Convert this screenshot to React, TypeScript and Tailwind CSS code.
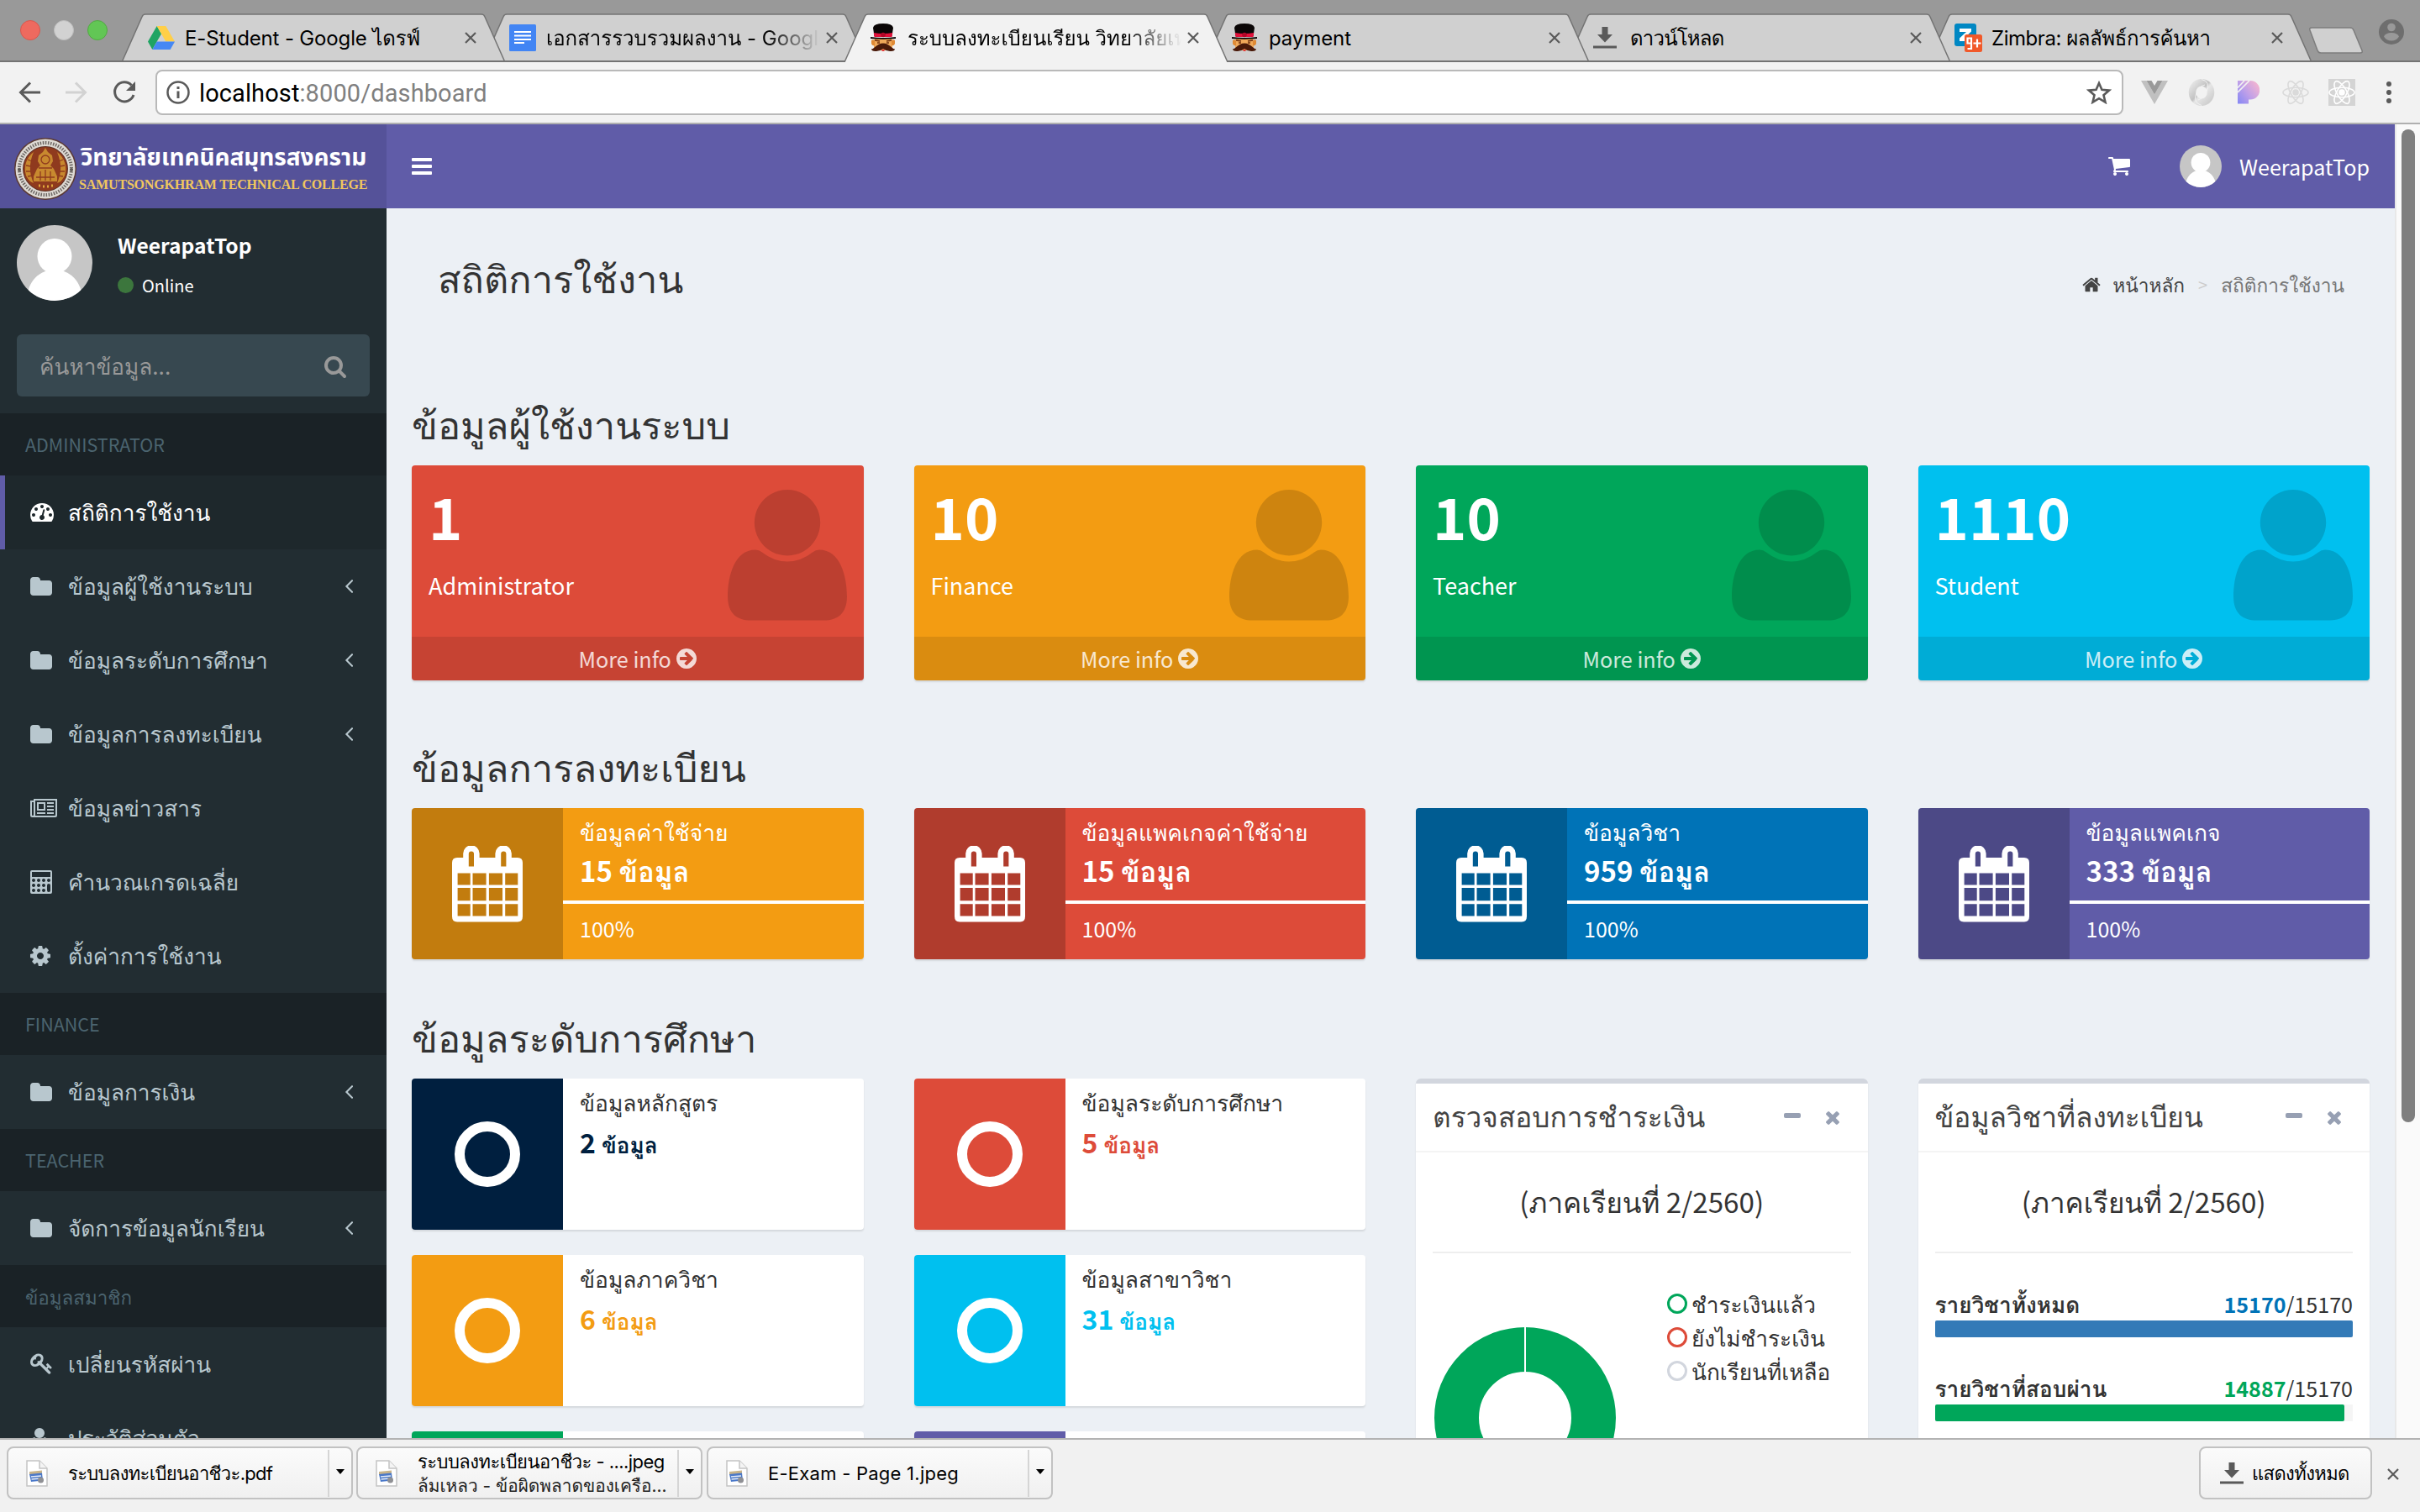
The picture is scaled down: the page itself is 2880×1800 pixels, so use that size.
import React from 'react';

type IconProps = { className?: string };

const UI = "font-['Noto_Sans_CJK_SC','Loma',sans-serif]";
const CHROME = "font-['Inter','Loma',sans-serif]";

/* ---------- icons ---------- */

const glyph = (viewBox: string, d: string) =>
  function Glyph({ className = '' }: IconProps) {
    return (
      <svg viewBox={viewBox} className={className} fill="currentColor" fillRule="evenodd">
        <path d={d} />
      </svg>
    );
  };

const Folder = glyph('0 0 1664 1664', 'M1664 608v704q0 92-66 158t-158 66H224q-92 0-158-66T0 1312V352q0-92 66-158t158-66h320q92 0 158 66t66 158v32h672q92 0 158 66t66 158z');
const AngleLeft = glyph('45 77 582 998', 'M627 992q0 13-10 23l-50 50q-10 10-23 10t-23-10L55 599q-10-10-10-23t10-23L521 87q10-10 23-10t23 10l50 50q10 10 10 23t-10 23L224 576l393 393q10 10 10 23z');
const Home = glyph('64 128 1664 1536', 'M1472 992v480q0 26-19 45t-45 19h-384v-384H768v384H384q-26 0-45-19t-19-45V992q0-1 .5-3t.5-3l575-474 575 474q1 2 1 6zm223-69l-62 74q-8 9-21 11h-3q-13 0-21-7L896 424l-692 577q-12 8-24 7-13-2-21-11l-62-74q-8-10-7-23.5t11-21.5l719-599q32-26 76-26t76 26l244 204V288q0-14 9-23t23-9h192q14 0 23 9t9 23v408l219 182q10 8 11 21.5t-7 23.5z');
const Cog = glyph('128 128 1536 1536', 'M1152 896q0-106-75-181t-181-75-181 75-75 181 75 181 181 75 181-75 75-181zm512-109v222q0 12-8 23t-20 13l-185 28q-19 54-39 91 35 50 107 138 10 12 10 25t-9 23q-27 37-99 108t-94 71q-12 0-26-9l-138-108q-44 23-91 38-16 136-29 186-7 28-36 28H785q-14 0-24.500-8.500T749 1634l-28-184q-49-16-90-37l-141 107q-10 9-25 9-14 0-25-11-126-114-165-168-7-10-7-23 0-12 8-23 15-21 51-66.500t54-70.500q-27-50-41-99l-183-27q-13-2-21-12.500t-8-23.500V783q0-12 8-23t19-13l186-28q14-46 39-92-40-57-107-138-10-12-10-24 0-10 9-23 26-36 98.500-107.500T465 263q13 0 26 10l138 107q44-23 91-38 16-136 29-186 7-28 36-28h222q14 0 24.500 8.500T1043 158l28 184q49 16 90 37l142-107q9-9 24-9 13 0 25 10 129 119 165 170 7 8 7 22 0 12-8 23-15 21-51 66.500t-54 70.500q26 50 41 98l183 28q13 2 21 12.500t8 23.500z');
const Search = glyph('64 128 1664 1664', 'M1216 832q0-185-131.500-316.500T768 384 451.500 515.500 320 832t131.500 316.500T768 1280t316.500-131.500T1216 832zm512 832q0 52-38 90t-90 38q-54 0-90-38l-343-342q-179 124-399 124-143 0-273.500-55.500t-225-150-150-225T64 832t55.500-273.500 150-225 225-150T768 128t273.500 55.500 225 150 150 225T1472 832q0 220-124 399l343 343q37 37 37 90z');
const ArrowCircle = glyph('128 128 1536 1536', 'M1413 896q0-27-18-45L1033 489l-91-91q-18-18-45-18t-45 18l-91 91q-18 18-18 45t18 45l189 189H448q-26 0-45 19t-19 45v128q0 26 19 45t45 19h502l-189 189q-19 19-19 45t19 45l91 91q18 18 45 18t45-18l362-362q18-18 18-45zm251 0q0 209-103 385.500T1281.500 1561 896 1664t-385.500-103T231 1281.500 128 896t103-385.500T510.500 231 896 128t385.500 103T1561 510.500 1664 896z');
const Times = glyph('302 366 1188 1188', 'M1490 1322q0 40-28 68l-136 136q-28 28-68 28t-68-28l-294-294-294 294q-28 28-68 28t-68-28l-136-136q-28-28-28-68t28-68l294-294-294-294q-28-28-28-68t28-68l136-136q28-28 68-28t68 28l294 294 294-294q28-28 68-28t68 28l136 136q28 28 28 68t-28 68l-294 294 294 294q28 28 28 68z');
const Key = glyph('0 100 1700 1700', 'M832 512q0-80-56-136t-136-56-136 56-56 136q0 42 19 83-41-19-83-19-80 0-136 56t-56 136 56 136 136 56 136-56 56-136q0-42-19-83 41 19 83 19 80 0 136-56t56-136zm851 704q0 17-49 66t-66 49q-9 0-28.500-16t-36.500-33-38.500-40-24.500-26l-96 96 220 220q28 28 28 68 0 42-39 81t-81 39q-40 0-68-28l-671-671q-176 131-365 131-163 0-265.500-102.500T0 784q0-160 95-313t248-248 313-95q163 0 265.500 102.500T1024 496q0 189-131 365l355 355 96-96q-3-3-26-24.500t-40-38.500-33-36.500-16-28.500q0-17 49-66t66-49q13 0 23 10 6 6 46 44.500t82 79.500 86.500 86 73 78 28.500 41z');
const Dashboard = glyph('0 256 1792 1408', 'M384 1152q0-53-37.500-90.500T256 1024t-90.500 37.500T128 1152t37.500 90.500T256 1280t90.500-37.500T384 1152zm192-448q0-53-37.500-90.500T448 576t-90.500 37.500T320 704t37.500 90.500T448 832t90.500-37.500T576 704zm428 481l101-382q6-26-7.500-48.500T1059 725t-48 6.500-30 39.500l-101 382q-60 5-107 43.500t-63 98.500q-20 77 20 146t117 89 146-20 89-117q16-60-6-117t-72-91zm660-33q0-53-37.500-90.500T1536 1024t-90.500 37.500T1408 1152t37.500 90.500T1536 1280t90.500-37.500T1664 1152zm-640-640q0-53-37.500-90.500T896 384t-90.500 37.500T768 512t37.500 90.500T896 640t90.500-37.500T1024 512zm448 192q0-53-37.500-90.500T1344 576t-90.500 37.500T1216 704t37.500 90.500T1344 832t90.500-37.500T1472 704zm320 448q0 261-141 483-19 29-54 29H195q-35 0-54-29Q0 1414 0 1152q0-182 71-348t191-286 286-191 348-71 348 71 286 191 191 286 71 348z');
const Cart = glyph('60 256 1668 1408', 'M704 1536q0 52-38 90t-90 38-90-38-38-90 38-90 90-38 90 38 38 90zm896 0q0 52-38 90t-90 38-90-38-38-90 38-90 90-38 90 38 38 90zm128-1088v512q0 24-16.500 42.500T1671 1024L627 1146q13 60 13 70 0 16-24 64h920q26 0 45 19t19 45-19 45-45 19H512q-26 0-45-19t-19-45q0-11 8-31.500t16-36 21.500-40T505 1207L328 384H124q-26 0-45-19t-19-45 19-45 45-19h256q16 0 28.500 6.500T428 278t13 24.500 8 26 5.500 29.500 4.500 26h1201q26 0 45 19t19 45z');
const Newspaper = glyph('0 0 32 22', 'M4 0H32V19.500Q32 22 29.500 22H2.500Q0 22 0 19.500V2H4ZM2 4V19Q2 20 3 20T4 19V4ZM6 2V20H29Q30 20 30 19V2ZM8 4H18V14H8ZM10 6V12H16V6ZM20 4H28V6H20ZM20 8H28V10H20ZM20 12H28V14H20ZM8 16H18V18H8ZM20 16H28V18H20Z');
const Calculator = glyph('0 0 26 28', 'M2 0H24Q26 0 26 2V26Q26 28 24 28H2Q0 28 0 26V2Q0 0 2 0ZM2 2V8H24V2ZM4 10a2 2 0 1 0 .01 0ZM10 10a2 2 0 1 0 .01 0ZM16 10a2 2 0 1 0 .01 0ZM22 10a2 2 0 1 0 .01 0ZM4 16a2 2 0 1 0 .01 0ZM10 16a2 2 0 1 0 .01 0ZM16 16a2 2 0 1 0 .01 0ZM22 16a2 2 0 0 0-2 2v6a2 2 0 0 0 4 0v-6a2 2 0 0 0-2-2ZM4 22a2 2 0 1 0 .01 0ZM10 22a2 2 0 1 0 .01 0ZM16 22a2 2 0 1 0 .01 0Z');
const User = glyph('0 0 22 24', 'M11 0a6 6 0 1 0 .01 0ZM5 11Q0 12 0 20Q0 24 4 24H18Q22 24 22 20Q22 12 17 11Q11 16 5 11Z');
const Person = glyph('0 0 142 156', 'M71 0a39.200 39.200 0 1 0 .01 0ZM33 71.500Q37.500 71.500 41 74.500Q55 85.500 71 85.500Q87 85.500 101 74.500Q104.500 71.500 109 71.500C134 71.500 142 103 142 127C142 148 130 155.500 115 155.500H27C12 155.500 0 148 0 127C0 103 8 71.500 33 71.500Z');
const Calendar = glyph('0 0 84 91', 'M6 14H13.200V9A9.700 9.700 0 0 1 32.600 9V14H51.400V9A9.700 9.700 0 0 1 70.800 9V14H78Q84 14 84 20V84Q84 90.500 78 90.500H6Q0 90.500 0 84V20Q0 14 6 14ZM19.800 9.500V24.500H26V9.500A3.100 3.100 0 0 0 19.800 9.500ZM58.200 9.500V24.500H64.400V9.500A3.100 3.100 0 0 0 58.200 9.500ZM6.600 32.600V46.500H21.700V32.600ZM24.500 32.600V46.500H40.600V32.600ZM43.900 32.600V46.500H60V32.600ZM63.200 32.600V46.500H78.300V32.600ZM6.600 50V65.200H21.700V50ZM24.500 50V65.200H40.600V50ZM43.900 50V65.200H60V50ZM63.200 50V65.200H78.300V50ZM6.600 69.300V83.600H21.700V69.300ZM24.500 69.300V83.600H40.600V69.300ZM43.900 69.300V83.600H60V69.300ZM63.200 69.300V83.600H78.300V69.300Z');

function Avatar({ className = '' }: IconProps) {
  return (
    <svg viewBox="0 0 90 90" className={`rounded-full ${className}`}>
      <rect width="90" height="90" fill="#c6c6c6" />
      <ellipse cx="45" cy="37" rx="20.500" ry="21" fill="#fff" />
      <path d="M12 90C12 66 28 53 45 53S78 66 78 90Z" fill="#fff" />
    </svg>
  );
}

function CloseX({ className = '' }: IconProps) {
  return (
    <svg viewBox="0 0 14 14" className={className} stroke="#5a5a5a" strokeWidth="2.200" fill="none">
      <path d="M1 1L13 13M13 1L1 13" />
    </svg>
  );
}

function DownloadArrow({ className = '' }: IconProps) {
  return (
    <svg viewBox="0 0 28 26" className={className} fill="#5a5a5a">
      <path d="M10.500 0h7v9h5.500L14 18.500 5 9h5.500zM0 22.500h28v3H0z" />
    </svg>
  );
}

function Atom({ className = '', color }: IconProps & { color: string }) {
  return (
    <svg viewBox="0 0 32 32" className={className} fill="none" stroke={color} strokeWidth="1.600">
      <ellipse cx="16" cy="16" rx="15" ry="5.800" />
      <ellipse cx="16" cy="16" rx="15" ry="5.800" transform="rotate(60 16 16)" />
      <ellipse cx="16" cy="16" rx="15" ry="5.800" transform="rotate(120 16 16)" />
      <circle cx="16" cy="16" r="3" fill={color} />
    </svg>
  );
}

function Emblem({ className = '' }: IconProps) {
  return (
    <svg viewBox="0 0 76 76" className={className}>
      <circle cx="38" cy="38" r="37" fill="#5b3a35" />
      <circle cx="38" cy="38" r="35.500" fill="#dedad4" />
      <circle cx="38" cy="38" r="31" fill="none" stroke="#6d6763" strokeWidth="4" strokeDasharray="1.500 1.600" />
      <circle cx="38" cy="38" r="27" fill="#5b3025" />
      <circle cx="38" cy="38" r="26" fill="#8f3a1e" />
      <g fill="#c8892f">
        <path d="M38 13l3 5 5 4 1 7-3 5 4 4 4 9v6H24v-6l4-9 4-4-3-5 1-7 5-4z" />
        <path d="M24 18c-9 7-12 17-9 28 3 6 6 8 9 9-5-11-6-23 0-37zM52 18c9 7 12 17 9 28-3 6-6 8-9 9 5-11 6-23 0-37z" />
      </g>
      <g fill="none" stroke="#8f3a1e" strokeWidth="1.300">
        <circle cx="38" cy="27" r="5" />
        <path d="M30 37h16M32 41v11M38 39v13M44 41v11M27 48h22M17 27l5 2M15 34l6 1M15 41l6 0M17 47l6-1M59 27l-5 2M61 34l-6 1M61 41l-6 0M59 47l-6-1" />
      </g>
      <path d="M30 58h2M35 59h2M40 59h2M45 58h2" stroke="#e0a73c" strokeWidth="3" />
      <circle cx="7" cy="39" r="2" fill="#5f5955" />
      <circle cx="69" cy="39" r="2" fill="#5f5955" />
    </svg>
  );
}

/* ---------- favicons ---------- */

function DriveIcon() {
  return (
    <svg viewBox="0 0 32 28" className="h-7 w-8">
      <path d="M10.700 0L0 18.600 5.300 28 16 9.300z" fill="#1fa463" />
      <path d="M10.700 0h10.600L32 18.600H21.300z" fill="#ffcf48" />
      <path d="M10.700 18.600H32L26.700 28H5.300z" fill="#4688f4" />
    </svg>
  );
}

function DocsIcon() {
  return (
    <svg viewBox="0 0 32 32" className="h-8 w-8">
      <rect width="32" height="32" rx="1.500" fill="#4285f4" />
      <path d="M6 8h20v2H6zM6 12.500h20v2H6zM6 17h20v2H6zM6 21h12v2H6z" fill="#fff" />
    </svg>
  );
}

function HatIcon() {
  return (
    <svg viewBox="0 0 30 34" className="h-[34px] w-[30px]">
      <rect x="4" y="17" width="22" height="15" rx="4" fill="#f0a95a" />
      <path d="M1 20q3-2 4 1v5q-3 1-4-2zM29 20q-3-2-4 1v5q3 1 4-2z" fill="#e08a35" />
      <path d="M5 20l6 1M19 21l6-1M8 23h3M19 23h3" stroke="#6d2e0c" strokeWidth="1.500" />
      <path d="M15 23.500C11 23.500 8 25.500 4 29Q2 31 1 30Q1 33.500 7 33Q12 32.500 15 30Q18 32.500 23 33Q29 33.500 29 30Q28 31 26 29C22 25.500 19 23.500 15 23.500Z" fill="#4a1a0a" />
      <path d="M13.500 31h3v2h-3z" fill="#e23b3b" />
      <path d="M3 5Q4 0 15 0T27 5L25.500 15H4.500z" fill="#0a0606" />
      <path d="M3.800 11q11.200 2 22.400 0l-.7 5h-21z" fill="#e0103a" />
      <circle cx="15" cy="13.500" r="2.800" fill="#b00828" />
      <path d="M0 16q15 2 30 0v2q-15 1.500-30 0z" fill="#0a0606" />
    </svg>
  );
}

function ZimbraIcon() {
  return (
    <svg viewBox="0 0 34 34" className="h-[34px] w-[34px]">
      <rect x="0" y="0" width="26" height="27" rx="3" fill="#0087c3" />
      <path d="M6 6h14v3.500L12 17h8v4H6v-3.500L14 10H6z" fill="#fff" />
      <rect x="12" y="13" width="21" height="21" rx="2.500" fill="#f1592a" />
      <path d="M20 17.500h-4.500v6H20v-6zM20 22v8h-4.500M22.500 23.500h9M27 18.500v10" stroke="#fff" strokeWidth="2.200" fill="none" />
    </svg>
  );
}

/* ---------- browser chrome ---------- */

const tabs = [
  { title: 'E-Student - Google ไดรฟ์', icon: <DriveIcon />, z: 'z-[6]', track: 'tracking-[-0.15px]' },
  { title: 'เอกสารรวบรวมผลงาน - Google', icon: <DocsIcon />, z: 'z-[5]', track: '', fade: true },
  { title: 'ระบบลงทะเบียนเรียน วิทยาลัยเทค', icon: <HatIcon />, z: 'z-10', track: '', active: true, fade: true },
  { title: 'payment', icon: <HatIcon />, z: 'z-[4]', track: 'tracking-[-0.1px]' },
  { title: 'ดาวน์โหลด', icon: <DownloadArrow className="h-[26px] w-7" />, z: 'z-[3]', track: 'tracking-[-0.8px]' },
  { title: 'Zimbra: ผลลัพธ์การค้นหา', icon: <ZimbraIcon />, z: 'z-[2]', track: 'tracking-[-0.45px]' },
];

function TabStrip() {
  return (
    <div className={`flex h-[74px] shrink-0 items-end bg-[#999999] ${CHROME}`}>
      <div className="flex h-[74px] w-[145px] shrink-0 items-center gap-4 border-b-2 border-[#737373] pl-6">
        <span className="h-6 w-6 rounded-full border border-[#d9574d] bg-[#ee6a5f]" />
        <span className="h-6 w-6 rounded-full border border-[#bdbdbd] bg-[#d2d2d2]" />
        <span className="h-6 w-6 rounded-full border border-[#52a843] bg-[#62c655]" />
      </div>
      {tabs.map((t) => (
        <div key={t.title} className={`relative -mr-[26px] h-[58px] w-[456px] shrink-0 ${t.z}`}>
          <svg viewBox="0 0 456 58" className="absolute inset-0 h-[58px] w-[456px]">
            <path
              d="M0 58L24 4Q25 1 28 1H428Q431 1 432 4L456 58Z"
              fill={t.active ? '#f2f2f2' : '#d0d0d0'}
            />
            <path
              d="M0 58L24 4Q25 1 28 1H428Q431 1 432 4L456 58"
              fill="none"
              stroke="#737373"
              strokeWidth="1.500"
            />
            {!t.active && <path d="M0 57H456" stroke="#737373" strokeWidth="2" />}
          </svg>
          <div className="relative flex h-full items-center pl-[31px]">
            <div className="flex w-11 items-center">{t.icon}</div>
            <div
              className={`mt-0.5 w-[326px] overflow-hidden whitespace-nowrap text-[24px] leading-[48px] text-black ${t.track} ${
                t.fade ? '[mask-image:linear-gradient(to_right,black_80%,transparent_100%)]' : ''
              }`}
            >
              {t.title}
            </div>
            <CloseX className="ml-[7px] h-3.5 w-3.5" />
          </div>
        </div>
      ))}
      <div className="flex h-[74px] grow items-center justify-between border-b-2 border-[#737373] pl-[22px] pr-[19px]">
        <svg viewBox="0 0 66 34" className="mt-[24px] h-[34px] w-[66px]">
          <path d="M4 2Q1 2 2 5L11 29Q12 32 15 32H62Q65 32 64 29L54 5Q53 2 50 2Z" fill="#d0d0d0" stroke="#7d7d7d" strokeWidth="1.500" />
        </svg>
        <svg viewBox="0 0 30 30" className="mt-[3px] h-[30px] w-[30px]">
          <circle cx="15" cy="15" r="15" fill="#6e6e6e" />
          <circle cx="15" cy="9.500" r="4.800" fill="#999" />
          <path d="M6 20.500Q8 16 15 16T24 20.500Q21 25.500 15 25.500T6 20.500Z" fill="#999" />
        </svg>
      </div>
    </div>
  );
}

function Toolbar() {
  return (
    <div className="flex h-[74px] shrink-0 items-center border-b-2 border-[#b0b0b0] bg-[#f2f2f2]">
      <svg viewBox="0 0 26 26" className="ml-[22px] h-[26px] w-[26px]" fill="none" stroke="#5a5a5a" strokeWidth="3">
        <path d="M26 13H3M14 1.500L2.500 13 14 24.500" />
      </svg>
      <svg viewBox="0 0 26 26" className="ml-[30px] h-[26px] w-[26px]" fill="none" stroke="#d2d2d2" strokeWidth="3">
        <path d="M0 13H23M12 1.500L23.500 13 12 24.500" />
      </svg>
      <svg viewBox="0 0 28 28" className="ml-[30px] h-7 w-7" fill="none" stroke="#5a5a5a" strokeWidth="3">
        <path d="M22.500 5.500A11.500 11.500 0 1 0 25 17" />
        <path d="M27 1v11H16z" fill="#5a5a5a" stroke="none" />
      </svg>
      <div className="ml-[23px] flex h-[54px] w-[2342px] items-center rounded-lg border-2 border-[#b9b9b9] bg-white pl-[11px] pr-[12px] font-['Roboto',sans-serif] text-[29px] tracking-[0.1px]">
        <svg viewBox="0 0 28 28" className="h-7 w-7" fill="none" stroke="#5a5a5a" strokeWidth="2.500">
          <circle cx="14" cy="14" r="12.500" />
          <path d="M14 12.500V21M14 7v3" strokeWidth="3" />
        </svg>
        <span className="ml-[11px] grow pt-0.5 leading-[48px] text-[#808080]">
          <span className="text-black">localhost</span>:8000/dashboard
        </span>
        <svg viewBox="0 0 30 28" className="h-7 w-[30px]" fill="none" stroke="#5a5a5a" strokeWidth="2.600">
          <path d="M15 3l3.400 7.800 8.600.8-6.500 5.700 2 8.400L15 21.200l-7.500 4.500 2-8.400L3 11.600l8.600-.8z" />
        </svg>
      </div>
      <svg viewBox="0 0 32 28" className="ml-[21px] h-7 w-8">
        <path d="M0 0h6.500L16 16.500 25.500 0H32L16 28z" fill="#c0c0c0" />
        <path d="M6.500 0h6L16 6l3.500-6h6L16 16.500z" fill="#9a9a9a" />
      </svg>
      <svg viewBox="0 0 32 32" className="ml-6 h-8 w-8">
        <defs>
          <linearGradient id="ring" x1="0" y1="0" x2="1" y2="1">
            <stop offset="0" stopColor="#e6e6e6" />
            <stop offset="0.450" stopColor="#c2c2c2" />
            <stop offset="0.550" stopColor="#e6e6e6" />
            <stop offset="1" stopColor="#cdcdcd" />
          </linearGradient>
        </defs>
        <ellipse cx="16" cy="16" rx="11" ry="11.800" fill="none" stroke="url(#ring)" strokeWidth="8.500" />
        <path d="M16 0.500Q27 3 22 15Q20 22 12 25M16 31.500Q5 28 10 16Q12 9 20 7" fill="none" stroke="#f2f2f2" strokeWidth="1" />
      </svg>
      <svg viewBox="0 0 26 28" className="ml-[27px] h-7 w-[26px]">
        <defs>
          <linearGradient id="pg" x1="0" y1="1" x2="1" y2="0.200">
            <stop offset="0" stopColor="#8487f5" />
            <stop offset="0.500" stopColor="#c0a0e8" />
            <stop offset="1" stopColor="#f5b5d0" />
          </linearGradient>
        </defs>
        <path d="M0 0h15a11 11 0 0 1 0 22.500h-2V27.500H0z" fill="url(#pg)" />
        <path d="M0 8.500L8 0M0 14L14 0" stroke="#f2f2f2" strokeWidth="1.600" />
      </svg>
      <Atom className="ml-[27px] h-8 w-8" color="#dadada" />
      <div className="ml-[23px] h-8 w-8 bg-[#d4d4d4]">
        <Atom className="h-8 w-8" color="#ffffff" />
      </div>
      <div className="ml-[37px] flex flex-col gap-1">
        <span className="h-1.5 w-1.5 rounded-full bg-[#5a5a5a]" />
        <span className="h-1.5 w-1.5 rounded-full bg-[#5a5a5a]" />
        <span className="h-1.5 w-1.5 rounded-full bg-[#5a5a5a]" />
      </div>
    </div>
  );
}

function FileIcon() {
  return (
    <svg viewBox="0 0 26 32" className="h-8 w-[26px]">
      <path d="M1 1h15l9 9v21H1z" fill="#fff" stroke="#c4c4c4" strokeWidth="1.500" />
      <path d="M16 1v9h9" fill="#f4f4f4" stroke="#c4c4c4" strokeWidth="1.500" />
      <path d="M4 14l15-1.500v4L4 18z" fill="#c9b48a" />
      <path d="M4 17l15-1.500 1 9L6 26z" fill="#4a78c8" />
      <path d="M6 20l12-1M6.500 23l11-1" stroke="#e8eef8" strokeWidth="1.500" />
      <circle cx="17.500" cy="24" r="3.500" fill="#8f9094" />
    </svg>
  );
}

function DownloadItem({ children, width }: { children: React.ReactNode; width: string }) {
  return (
    <div className={`flex h-[63px] items-center rounded-lg border-2 border-[#c2c2c2] bg-gradient-to-b from-[#fbfbfb] to-[#f0f0f0] pl-[21px] ${width}`}>
      <FileIcon />
      <div className="ml-6 flex grow flex-col whitespace-nowrap text-black">{children}</div>
      <div className="h-[56px] w-0.5 bg-[#d5d5d5]" />
      <div className="flex w-[26px] justify-center pb-1">
        <span className="h-0 w-0 border-x-[5px] border-t-[6px] border-x-transparent border-t-black" />
      </div>
    </div>
  );
}

function DownloadBar() {
  return (
    <div className={`flex h-[88px] shrink-0 items-start border-t-2 border-[#b3b3b3] bg-[#f1f1f1] pl-2 pr-[25px] pt-2 ${CHROME}`}>
      <DownloadItem width="w-[412px] mr-1">
        <span className="text-[22px] leading-[40px] tracking-[-0.68px]">ระบบลงทะเบียนอาชีวะ.pdf</span>
      </DownloadItem>
      <DownloadItem width="w-[412px] mr-[5px]">
        <span className="text-[22px] leading-[30px] tracking-[-0.55px]">ระบบลงทะเบียนอาชีวะ - ....jpeg</span>
        <span className="text-[20.800px] leading-[28px] text-[#222]">ล้มเหลว - ข้อผิดพลาดของเครือ...</span>
      </DownloadItem>
      <DownloadItem width="w-[412px]">
        <span className="text-[22px] leading-[40px] tracking-[0.25px]">E-Exam - Page 1.jpeg</span>
      </DownloadItem>
      <div className="ml-auto flex h-[63px] w-[206px] items-center gap-2.5 rounded-lg border-2 border-[#c2c2c2] bg-gradient-to-b from-[#fbfbfb] to-[#f0f0f0] pl-[23px]">
        <DownloadArrow className="h-[26px] w-7" />
        <span className="whitespace-nowrap text-[22px] leading-[40px] tracking-[-0.6px] text-black">แสดงทั้งหมด</span>
      </div>
      <CloseX className="ml-[18px] mt-[26px] h-3.5 w-3.5" />
    </div>
  );
}

/* ---------- page ---------- */

function SideHeader({ children, size = 'text-[21.500px]' }: { children: React.ReactNode; size?: string }) {
  return <div className={`flex h-[74px] shrink-0 items-center bg-[#1a2226] pl-[30px] leading-[34px] text-[#4b646f] ${size}`}>{children}</div>;
}

function SideItem({ icon, label, tree, active }: { icon: React.ReactNode; label: string; tree?: boolean; active?: boolean }) {
  return (
    <div
      className={`flex h-[88px] shrink-0 items-center border-l-[6px] pl-[30px] pr-10 text-[26.200px] leading-[40px] ${
        active ? 'border-[#605ca8] bg-[#1e282c] text-white' : 'border-transparent text-[#b8c7ce]'
      }`}
    >
      <span className="flex w-[45px] items-center">{icon}</span>
      <span className="grow whitespace-nowrap pb-[3px]">{label}</span>
      {tree && <AngleLeft className="h-4 w-[9.300px]" />}
    </div>
  );
}

function Sidebar() {
  const folder = <Folder className="h-[26px] w-[26px]" />;
  return (
    <aside className="flex w-[460px] shrink-0 flex-col overflow-hidden bg-[#222d32]">
      <div className="flex h-[100px] shrink-0 items-center bg-[#555299] pl-4">
        <Emblem className="mt-[6px] h-[76px] w-[76px]" />
        <div className="ml-0.5 whitespace-nowrap">
          <div className="pl-0.5 font-['Noto_Sans_Thai',sans-serif] text-[28px] font-bold leading-[44px] tracking-[-0.05px] text-white">วิทยาลัยเทคนิคสมุทรสงคราม</div>
          <div className="font-['Liberation_Serif',serif] text-[16px] font-bold leading-[18px] tracking-[-0.18px] text-[#f0c75e]">SAMUTSONGKHRAM TECHNICAL COLLEGE</div>
        </div>
      </div>
      <div className="flex h-[130px] shrink-0 items-start pl-5 pt-5">
        <Avatar className="h-[90px] w-[90px]" />
        <div className="ml-[30px]">
          <div className="text-[24.600px] font-bold leading-[46px] text-white">WeerapatTop</div>
          <div className="flex items-center gap-[10px] pt-1 text-[20px] leading-[44px] text-white">
            <span className="-mt-0.5 h-[19px] w-[19px] rounded-full bg-[#3c763d]" />
            Online
          </div>
        </div>
      </div>
      <div className="px-5 pb-5 pt-5">
        <div className="flex h-[74px] items-center justify-between rounded-md bg-[#374850] pl-[27px] pr-7 text-[26.200px] leading-[40px] text-[#999]">
          ค้นหาข้อมูล...
          <Search className="mt-[3px] h-[26px] w-[26px]" />
        </div>
      </div>
      <SideHeader>ADMINISTRATOR</SideHeader>
      <SideItem active icon={<Dashboard className="h-[22px] w-7" />} label="สถิติการใช้งาน" />
      <SideItem tree icon={folder} label="ข้อมูลผู้ใช้งานระบบ" />
      <SideItem tree icon={folder} label="ข้อมูลระดับการศึกษา" />
      <SideItem tree icon={folder} label="ข้อมูลการลงทะเบียน" />
      <SideItem icon={<Newspaper className="h-[22px] w-8" />} label="ข้อมูลข่าวสาร" />
      <SideItem icon={<Calculator className="h-7 w-[26px]" />} label="คำนวณเกรดเฉลี่ย" />
      <SideItem icon={<Cog className="h-6 w-6" />} label="ตั้งค่าการใช้งาน" />
      <SideHeader>FINANCE</SideHeader>
      <SideItem tree icon={folder} label="ข้อมูลการเงิน" />
      <SideHeader>TEACHER</SideHeader>
      <SideItem tree icon={folder} label="จัดการข้อมูลนักเรียน" />
      <SideHeader size="text-[22.400px]">ข้อมูลสมาชิก</SideHeader>
      <SideItem icon={<Key className="h-[26px] w-[26px]" />} label="เปลี่ยนรหัสผ่าน" />
      <SideItem icon={<User className="h-6 w-[22px]" />} label="ประวัติส่วนตัว" />
    </aside>
  );
}

const SHADOW = 'shadow-[0_2px_2px_rgba(0,0,0,0.1)]';

const people = [
  { n: '1', label: 'Administrator', bg: 'bg-[#dd4b39]' },
  { n: '10', label: 'Finance', bg: 'bg-[#f39c12]' },
  { n: '10', label: 'Teacher', bg: 'bg-[#00a65a]' },
  { n: '1110', label: 'Student', bg: 'bg-[#00c0ef]' },
];

const registrations = [
  { label: 'ข้อมูลค่าใช้จ่าย', n: '15 ข้อมูล', bg: 'bg-[#f39c12]' },
  { label: 'ข้อมูลแพคเกจค่าใช้จ่าย', n: '15 ข้อมูล', bg: 'bg-[#dd4b39]' },
  { label: 'ข้อมูลวิชา', n: '959 ข้อมูล', bg: 'bg-[#0073b7]' },
  { label: 'ข้อมูลแพคเกจ', n: '333 ข้อมูล', bg: 'bg-[#605ca8]' },
];

const levels = [
  [
    { label: 'ข้อมูลหลักสูตร', n: '2 ข้อมูล', bg: 'bg-[#001f3f]', fg: 'text-[#001f3f]' },
    { label: 'ข้อมูลภาควิชา', n: '6 ข้อมูล', bg: 'bg-[#f39c12]', fg: 'text-[#f39c12]' },
    { label: '', n: '', bg: 'bg-[#00a65a]', fg: '' },
  ],
  [
    { label: 'ข้อมูลระดับการศึกษา', n: '5 ข้อมูล', bg: 'bg-[#dd4b39]', fg: 'text-[#dd4b39]' },
    { label: 'ข้อมูลสาขาวิชา', n: '31 ข้อมูล', bg: 'bg-[#00c0ef]', fg: 'text-[#00c0ef]' },
    { label: '', n: '', bg: 'bg-[#605ca8]', fg: '' },
  ],
];

function Heading({ children, className }: { children: React.ReactNode; className: string }) {
  return <h2 className={`flex h-[92px] shrink-0 items-center pb-2 text-[45.200px] leading-[60px] text-[#333] ${className}`}>{children}</h2>;
}

function Box({ title, children }: { title: string; children: React.ReactNode }) {
  return (
    <div className={`h-[600px] rounded-md border-t-[6px] border-[#d2d6de] bg-white ${SHADOW}`}>
      <div className="flex h-[82px] items-center border-b-2 border-[#f4f4f4] pl-5 pr-[34px]">
        <h3 className="grow whitespace-nowrap pb-[5px] text-[33.400px] leading-[40px] text-[#444]">{title}</h3>
        <span className="-mt-1 h-[6px] w-5 rounded-[2px] bg-[#97a0b3]" />
        <Times className="ml-[30px] mt-0.5 h-4 w-4 text-[#97a0b3]" />
      </div>
      <div className="px-5">
        <div className="flex h-[120px] items-center justify-center border-b-2 border-[#eee] pb-0.5 text-[33.200px] leading-[40px] text-[#333]">
          (ภาคเรียนที่ 2/2560)
        </div>
        {children}
      </div>
    </div>
  );
}

function Legend({ ring, label }: { ring: string; label: string }) {
  return (
    <div className="flex h-10 items-center gap-[5px] whitespace-nowrap">
      <span className={`h-6 w-6 rounded-full border-[3.500px] ${ring}`} />
      {label}
    </div>
  );
}

function Meter({ label, value, color, bar, percent }: { label: string; value: string; color: string; bar: string; percent: number }) {
  return (
    <div className="h-[100px]">
      <div className="flex h-10 items-center justify-between whitespace-nowrap leading-[40px]">
        <span className="text-[26.200px] font-bold">{label}</span>
        <span className="text-[25.100px]">
          <b className={color}>{value}</b>/15170
        </span>
      </div>
      <div className="h-5 bg-[#f5f5f5]">
        <div className={`h-5 rounded-[2px] ${bar}`} style={{ width: `${percent}%` }} />
      </div>
    </div>
  );
}

function Content() {
  return (
    <main className="flex w-[2390px] shrink-0 flex-col overflow-hidden bg-[#ecf0f5] text-[#333]">
      <header className="flex h-[100px] shrink-0 items-center bg-[#605ca8] pl-[30px] pr-[30px] text-white">
        <div className="flex w-6 flex-col gap-1">
          <span className="h-1 w-6 rounded-[1px] bg-white" />
          <span className="h-1 w-6 rounded-[1px] bg-white" />
          <span className="h-1 w-6 rounded-[1px] bg-white" />
        </div>
        <Cart className="ml-auto h-[22px] w-[26px]" />
        <Avatar className="ml-[59px] h-[50px] w-[50px]" />
        <span className="ml-[21px] text-[25.100px] leading-[40px]">WeerapatTop</span>
      </header>

      <div className="flex h-[172px] shrink-0 items-center justify-between pl-[61px] pr-[60px]">
        <h1 className="whitespace-nowrap pb-2 text-[45.200px] leading-[60px]">สถิติการใช้งาน</h1>
        <div className="mt-2.5 flex items-center whitespace-nowrap text-[22.700px] leading-[36px] text-[#777]">
          <Home className="mr-3.5 h-[20px] w-[22px] text-[#444]" />
          <span className="text-[#444]">หน้าหลัก</span>
          <span className="mx-4 text-[20px] text-[#ccc]">&gt;</span>
          <span>สถิติการใช้งาน</span>
        </div>
      </div>

      <div className="px-[30px]">
        <Heading className="mt-[42px]">ข้อมูลผู้ใช้งานระบบ</Heading>
        <div className="grid grid-cols-4 gap-[60px]">
          {people.map((p) => (
            <div key={p.label} className={`flex h-64 flex-col overflow-hidden rounded-[4px] text-white ${p.bg} ${SHADOW}`}>
              <div className="flex grow justify-between pl-5 pr-5 pt-5">
                <div>
                  <div className="text-[68.500px] font-bold leading-[80px]">{p.n}</div>
                  <div className="pt-[23px] text-[27px] leading-[40px]">{p.label}</div>
                </div>
                <Person className="mt-[9px] h-[156px] w-[142px] text-black/15" />
              </div>
              <div className="flex h-[52px] items-center justify-center gap-1.5 bg-black/10 text-[25.200px] leading-[40px] text-white/80">
                More info
                <ArrowCircle className="h-6 w-6" />
              </div>
            </div>
          ))}
        </div>

        <Heading className="mt-[60px]">ข้อมูลการลงทะเบียน</Heading>
        <div className="grid grid-cols-4 gap-[60px]">
          {registrations.map((r) => (
            <div key={r.label} className={`flex h-[180px] overflow-hidden rounded-[4px] text-white ${r.bg} ${SHADOW}`}>
              <div className="flex w-[180px] items-center justify-center bg-black/20">
                <Calendar className="h-[91px] w-[84px]" />
              </div>
              <div className="flex grow flex-col whitespace-nowrap">
                <div className="pl-5 pt-2 text-[26.400px] leading-[40px]">{r.label}</div>
                <div className="pl-5 text-[33px] font-bold leading-[52px]">{r.n}</div>
                <div className="mt-2.5 h-1 bg-white" />
                <div className="pl-5 pt-[9px] text-[25px] leading-[40px]">100%</div>
              </div>
            </div>
          ))}
        </div>

        <Heading className="mt-[50px]">ข้อมูลระดับการศึกษา</Heading>
        <div className="grid grid-cols-4 gap-[60px]">
          {levels.map((col, i) => (
            <div key={i} className="flex flex-col gap-[30px]">
              {col.map((c) => (
                <div key={c.bg} className={`flex h-[180px] overflow-hidden rounded-[4px] bg-white ${SHADOW}`}>
                  <div className={`flex w-[180px] items-center justify-center ${c.bg}`}>
                    <span className="h-[78px] w-[78px] rounded-full border-[12px] border-white" />
                  </div>
                  <div className="whitespace-nowrap pl-5 pt-2">
                    <div className="text-[26.400px] leading-[40px]">{c.label}</div>
                    <div className={`flex items-baseline gap-[7px] font-bold leading-[54px] ${c.fg}`}>
                      <span className="text-[32px]">{c.n.split(' ')[0]}</span>
                      <span className="text-[26.200px]">{c.n.split(' ')[1]}</span>
                    </div>
                  </div>
                </div>
              ))}
            </div>
          ))}
          <Box title="ตรวจสอบการชำระเงิน">
            <div className="flex pt-10 text-[26.200px] leading-[40px]">
              <svg viewBox="0 0 220 220" className="mt-[46px] h-[220px] w-[220px]">
                <circle cx="110" cy="110" r="81.500" fill="none" stroke="#00a65a" strokeWidth="53" />
                <path d="M110 0V57" stroke="#fff" strokeWidth="2" />
              </svg>
              <div className="ml-[59px]">
                <Legend ring="border-[#00a65a]" label="ชำระเงินแล้ว" />
                <Legend ring="border-[#dd4b39]" label="ยังไม่ชำระเงิน" />
                <Legend ring="border-[#d2d6de]" label="นักเรียนที่เหลือ" />
              </div>
            </div>
          </Box>
          <Box title="ข้อมูลวิชาที่ลงทะเบียน">
            <div className="pt-10">
              <Meter label="รายวิชาทั้งหมด" value="15170" color="text-[#0073b7]" bar="bg-[#337ab7]" percent={100} />
              <Meter label="รายวิชาที่สอบผ่าน" value="14887" color="text-[#00a65a]" bar="bg-[#00a65a]" percent={98} />
            </div>
          </Box>
        </div>
      </div>
    </main>
  );
}

export default function App() {
  return (
    <div className="flex h-[1800px] w-[2880px] flex-col overflow-hidden bg-white">
      <TabStrip />
      <Toolbar />
      <div className={`flex h-[1564px] shrink-0 overflow-hidden ${UI}`}>
        <Sidebar />
        <Content />
        <div className="flex w-[30px] shrink-0 justify-center border-l-2 border-[#e8e8e8] bg-[#fafafa]">
          <div className="mt-1.5 h-[1182px] w-4 rounded-full bg-[#7f7f7f]" />
        </div>
      </div>
      <DownloadBar />
    </div>
  );
}
